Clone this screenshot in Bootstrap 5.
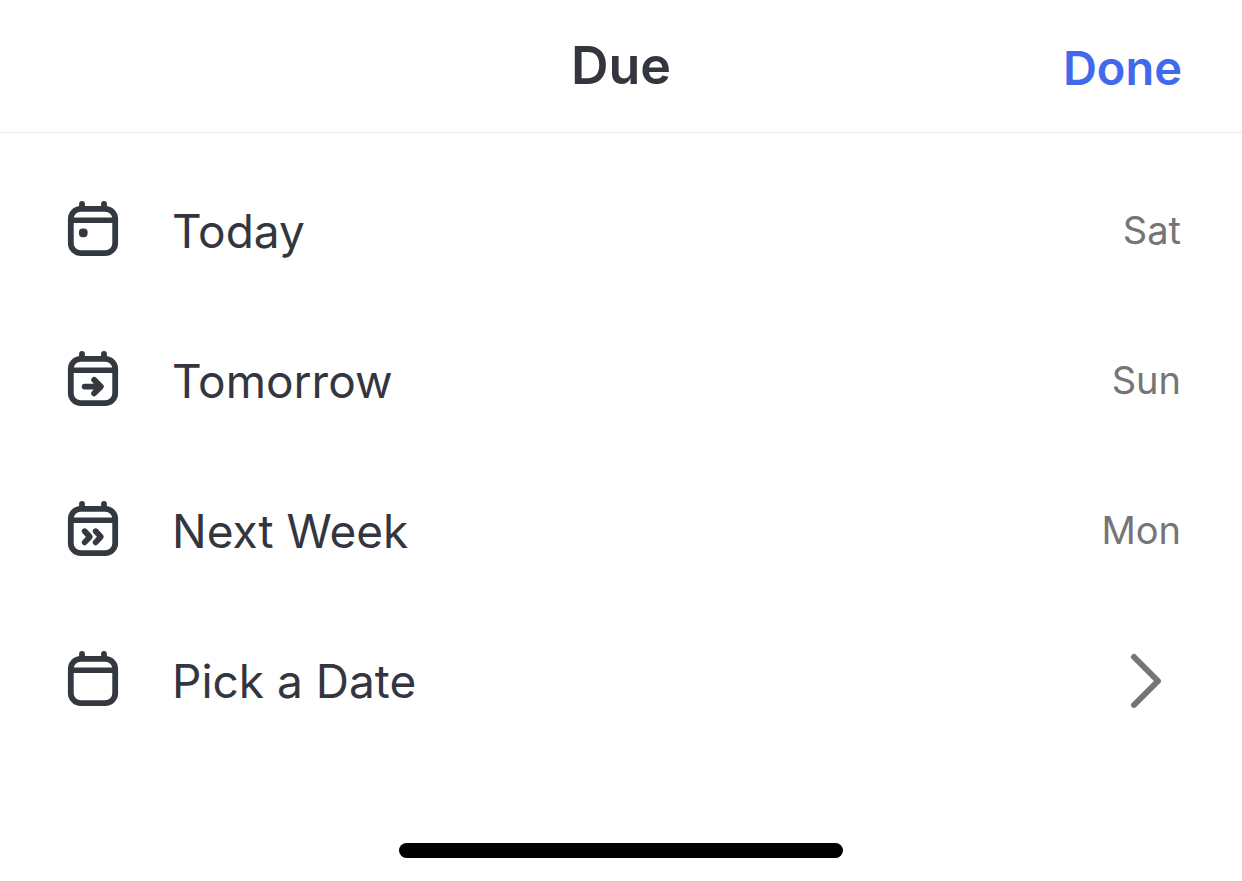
<!DOCTYPE html>
<html lang="en">
<head>
<meta charset="utf-8">
<meta name="viewport" content="width=device-width, initial-scale=1">
<title>Due</title>
<link href="https://cdn.jsdelivr.net/npm/bootstrap@5.3.0/dist/css/bootstrap.min.css" rel="stylesheet">
<style>
body { font-family: Inter, sans-serif; color: #34363f; background: #fff; }
.sheet { border-bottom: 1px solid #c6c6c8; }
.sheet-header { height: 133px; border-bottom: 1px solid #ebebeb; padding: 0 60px; }
.header-side { flex: 1 1 0; }
.sheet-title { font-size: 52px; line-height: 64px; font-weight: 600; }
.done { font-size: 47px; line-height: 62px; font-weight: 600; color: #4169eb; }
.options { padding-top: 24px; }
.option { height: 150px; padding: 0 61px 0 66px; color: inherit; background: none; border: 0; }
.option-icon { width: 54px; height: 64px; margin-right: 52px; }
.option-label { font-size: 46px; line-height: 60px; padding-bottom: 2px; }
.option-day { font-size: 38px; line-height: 60px; padding-bottom: 4px; color: #757575; }
.chevron { width: 34px; height: 58px; margin-right: 18px; }
.home-area { padding-bottom: 23px; }
.home-bar { width: 444px; height: 15px; background: #000; }
</style>
</head>
<body>
<svg class="d-none" aria-hidden="true">
  <symbol id="calendar" viewBox="0 0 54 64">
    <g fill="none" stroke="#34383f" stroke-width="5.8" stroke-linecap="round">
      <rect x="4.8" y="8.8" width="44.4" height="44.4" rx="10"/>
      <path d="M5 20.3H49" stroke-width="5.4" stroke-linecap="butt"/>
      <path d="M16 3.9V8M38 3.9V8"/>
    </g>
  </symbol>
</svg>
<main class="sheet min-vh-100 d-flex flex-column">
  <header class="sheet-header d-flex align-items-center">
    <div class="header-side"></div>
    <h1 class="sheet-title m-0">Due</h1>
    <div class="header-side d-flex justify-content-end"><button type="button" class="done btn p-0 pt-1 border-0">Done</button></div>
  </header>
  <div class="options">
    <button type="button" class="option d-flex align-items-center w-100">
      <svg class="option-icon flex-shrink-0" viewBox="0 0 54 64" aria-hidden="true"><use href="#calendar"/><rect x="13" y="28.4" width="8.6" height="8.8" rx="3.6" fill="#34383f"/></svg>
      <span class="option-label">Today</span>
      <span class="option-day ms-auto">Sat</span>
    </button>
    <button type="button" class="option d-flex align-items-center w-100">
      <svg class="option-icon flex-shrink-0" viewBox="0 0 54 64" aria-hidden="true"><use href="#calendar"/><path d="M18.7 36.6H34M28.2 29.9L34.8 36.6L28.2 43.3" fill="none" stroke="#34383f" stroke-width="5.9" stroke-linecap="round" stroke-linejoin="round"/></svg>
      <span class="option-label">Tomorrow</span>
      <span class="option-day ms-auto">Sun</span>
    </button>
    <button type="button" class="option d-flex align-items-center w-100">
      <svg class="option-icon flex-shrink-0" viewBox="0 0 54 64" aria-hidden="true"><use href="#calendar"/><path d="M18.7 31.2L23.8 36.8L18.7 42.4M29.7 31.2L34.8 36.8L29.7 42.4" fill="none" stroke="#34383f" stroke-width="5.8" stroke-linecap="round" stroke-linejoin="round"/></svg>
      <span class="option-label">Next Week</span>
      <span class="option-day ms-auto">Mon</span>
    </button>
    <button type="button" class="option d-flex align-items-center w-100">
      <svg class="option-icon flex-shrink-0" viewBox="0 0 54 64" aria-hidden="true"><use href="#calendar"/></svg>
      <span class="option-label">Pick a Date</span>
      <svg class="chevron ms-auto flex-shrink-0" viewBox="0 0 34 58" aria-hidden="true"><path d="M5 4L29 28L5 52" fill="none" stroke="#757575" stroke-width="6" stroke-linecap="round" stroke-linejoin="round"/></svg>
    </button>
  </div>
  <div class="home-area mt-auto d-flex justify-content-center"><div class="home-bar rounded-pill"></div></div>
</main>
<script src="https://cdn.jsdelivr.net/npm/bootstrap@5.3.0/dist/js/bootstrap.bundle.min.js"></script>
</body>
</html>
